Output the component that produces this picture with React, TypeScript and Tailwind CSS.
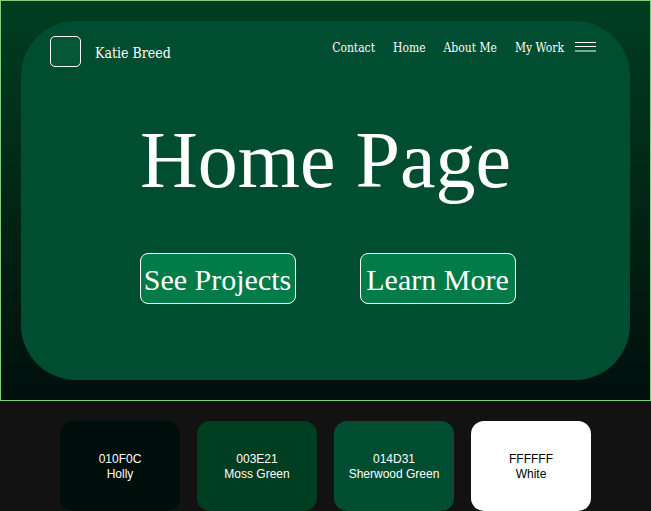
const navLinks = ["Contact", "Home", "About Me", "My Work"];

const swatches = [
  { code: "010F0C", name: "Holly", style: "bg-[#010f0c] text-white" },
  { code: "003E21", name: "Moss Green", style: "bg-[#003e21] text-white" },
  { code: "014D31", name: "Sherwood Green", style: "bg-[#014d31] text-white" },
  { code: "FFFFFF", name: "White", style: "bg-white text-black" },
];

function Header() {
  return (
    <header className="flex items-start justify-between pt-[15px] pr-[34px] pl-[29px] font-['DejaVu_Serif_Condensed','DejaVu_Serif',serif]">
      <div className="flex items-center gap-[14px]">
        <div className="size-[31px] rounded-[5px] border border-white bg-[#06573a]" />
        <span className="pt-[2px] text-[14px] leading-5 whitespace-nowrap">Katie Breed</span>
      </div>
      <div className="flex items-center gap-[11px]">
        <nav className="flex gap-[18px] pt-[2px] text-[12px] leading-5 whitespace-nowrap">
          {navLinks.map((label) => (
            <a key={label} href="#">{label}</a>
          ))}
        </nav>
        <button type="button" aria-label="Menu" className="flex w-[21px] flex-col gap-[3px]">
          <span className="h-px w-full bg-white" />
          <span className="h-px w-full bg-white" />
          <span className="h-[2px] w-full bg-white/50" />
        </button>
      </div>
    </header>
  );
}

export default function App() {
  return (
    <div className="min-h-screen bg-[#121212] text-white">
      <section className="border border-[#7fcf7b] bg-linear-to-b from-[#003e21] to-[#010f0c] px-5 py-5 font-['Liberation_Serif',serif]">
        <div className="rounded-[55px] bg-[#014d31] pb-[76px]">
          <Header />
          <h1 className="mt-[47px] text-center text-[80px] leading-[92px]">Home Page</h1>
          <div className="mt-[47px] flex justify-center gap-16 pl-1 text-[30px]">
            <button type="button" className="h-[51px] w-[156px] rounded-[8px] border border-white bg-[#017b48] pt-[2px] leading-[45px] whitespace-nowrap">
              See Projects
            </button>
            <button type="button" className="h-[51px] w-[156px] rounded-[8px] border border-white bg-[#017b48] pt-[2px] leading-[45px] whitespace-nowrap">
              Learn More
            </button>
          </div>
        </div>
      </section>
      <ul className="flex justify-center gap-[17px] pt-5 font-['Liberation_Sans',sans-serif] text-[12px] leading-[15px]">
        {swatches.map(({ code, name, style }) => (
          <li key={code} className={`flex h-[90px] w-[120px] flex-col items-center justify-center rounded-[13px] pt-[2px] ${style}`}>
            <span>{code}</span>
            <span>{name}</span>
          </li>
        ))}
      </ul>
    </div>
  );
}
